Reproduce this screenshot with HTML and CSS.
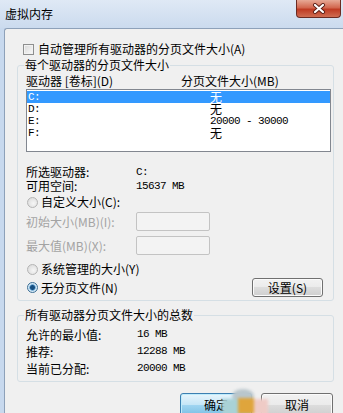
FILE: index.html
```html
<!DOCTYPE html>
<html lang="zh-CN">
<head>
    <meta charset="UTF-8">
    <meta name="viewport" content="width=device-width, initial-scale=1.0">
    <title>虚拟内存</title>
    <link rel="stylesheet" href="styles.css">
</head>
<body>

    <div class="window">
        <div class="titlebar">
            <span class="title">虚拟内存</span>
            <button class="close" type="button" aria-label="关闭">
                <svg width="14" height="11" viewBox="0 0 14 11">
                    <path d="M3 2 L11 9 M11 2 L3 9" stroke="#5a1e16" stroke-width="4" stroke-linecap="round"/>
                    <path d="M3 2 L11 9 M11 2 L3 9" stroke="#ffffff" stroke-width="2.2" stroke-linecap="round"/>
                </svg>
            </button>
        </div>

        <div class="client">
            <label class="check-row"><span class="checkbox"></span>自动管理所有驱动器的分页文件大小(A)</label>

            <fieldset class="group">
                <legend>每个驱动器的分页文件大小</legend>
                <div class="list-head"><span>驱动器 [卷标](D)</span><span>分页文件大小(MB)</span></div>
                <ul class="listbox">
                    <li class="selected"><span class="mono">C:</span><span>无</span></li>
                    <li><span class="mono">D:</span><span>无</span></li>
                    <li><span class="mono">E:</span><span class="mono">20000 - 30000</span></li>
                    <li><span class="mono">F:</span><span>无</span></li>
                </ul>

                <div class="field-row first"><span>所选驱动器:</span><span class="mono">C:</span></div>
                <div class="field-row"><span>可用空间:</span><span class="mono">15637 MB</span></div>

                <label class="radio-row"><span class="radio"></span>自定义大小(C):</label>
                <div class="input-row"><span class="muted">初始大小(MB)(I):</span><span class="textbox"></span></div>
                <div class="input-row gap"><span class="muted">最大值(MB)(X):</span><span class="textbox"></span></div>
                <label class="radio-row system"><span class="radio"></span>系统管理的大小(Y)</label>
                <div class="last-row">
                    <label class="radio-row"><span class="radio checked"></span>无分页文件(N)</label>
                    <button class="btn set" type="button">设置(S)</button>
                </div>
            </fieldset>

            <fieldset class="group totals">
                <legend>所有驱动器分页文件大小的总数</legend>
                <div class="total-row first"><span>允许的最小值:</span><span class="mono">16 MB</span></div>
                <div class="total-row"><span>推荐:</span><span class="mono">12288 MB</span></div>
                <div class="total-row"><span>当前已分配:</span><span class="mono">20000 MB</span></div>
            </fieldset>

            <div class="actions">
                <button class="btn primary" type="button">确定</button>
                <button class="btn" type="button">取消</button>
            </div>
        </div>
    </div>

    <div class="watermark">
        <span class="wm-top"></span>
        <span class="wm-a"></span>
        <span class="wm-b"></span>
        <span class="wm-c"></span>
    </div>

</body>
</html>
```

FILE: styles.css
```css
body {
    margin: 0;
    width: 343px;
    height: 413px;
    overflow: hidden;
    position: relative;
    font-family: "Noto Sans CJK SC", sans-serif;
    font-size: 12px;
    color: #000;
    background: #c8d9ee;
}

.window {
    display: flex;
    flex-direction: column;
    height: 413px;
}

.titlebar {
    height: 28px;
    flex: none;
    display: flex;
    justify-content: space-between;
    align-items: flex-start;
    background: linear-gradient(#dfe9f5, #cbdbee);
}

.title {
    margin: 7px 0 0 5px;
    line-height: 14px;
}

.close {
    width: 45px;
    height: 18px;
    margin-right: 2px;
    padding: 0;
    border: 1px solid #6b2b22;
    border-top: none;
    border-radius: 0 0 4px 4px;
    background: linear-gradient(#e7a996, #d2674f 45%, #bf3b23 55%, #cf6d52);
    display: flex;
    align-items: center;
    justify-content: center;
}

.client {
    flex: 1;
    margin-left: 4px;
    border-left: 1px solid #8ea1b9;
    border-top: 1px solid #8ea1b9;
    border-top-left-radius: 3px;
    background: #f0f0f0;
    padding: 13px 0 0 12px;
}

.mono {
    font-family: "Liberation Mono", monospace;
    font-size: 11px;
    letter-spacing: -0.6px;
}

.check-row {
    display: flex;
    align-items: center;
    gap: 4px;
    height: 14px;
    line-height: 14px;
    margin-left: 6px;
}

.checkbox {
    width: 11px;
    height: 11px;
    box-sizing: border-box;
    border: 1px solid #8e8f8f;
    background: linear-gradient(135deg, #d8d8d8, #fafafa);
    box-shadow: inset 0 0 0 1px #f2f2f2;
}

.group {
    width: 317px;
    min-width: 0;
    box-sizing: border-box;
    margin: 3px 0 0;
    padding: 0 2px 3px 8px;
    border: 1px solid #d5dfe5;
    border-radius: 3px;
}

.group legend {
    padding: 0 1px;
    margin-left: -2px;
    line-height: 12px;
}

.list-head {
    display: grid;
    grid-template-columns: 155px 1fr;
    margin-top: 4px;
    line-height: 12px;
}

.listbox {
    list-style: none;
    margin: 2px 0 0;
    padding: 1px 0 0;
    height: 63px;
    box-sizing: border-box;
    border: 1px solid #828790;
    background: #fff;
}

.listbox li {
    display: grid;
    grid-template-columns: 182px 1fr;
    height: 12px;
    line-height: 12px;
    padding-left: 1px;
}

.listbox li.selected {
    background: #3399ff;
    color: #fff;
}

.field-row {
    display: grid;
    grid-template-columns: 110px 1fr;
    line-height: 14px;
}

.field-row.first {
    margin-top: 13px;
}

.radio-row {
    display: flex;
    align-items: center;
    gap: 3px;
    height: 14px;
    line-height: 14px;
    margin-top: 2px;
    margin-left: 1px;
}

.radio-row.system {
    margin-top: 7px;
}

.radio {
    width: 11px;
    height: 11px;
    box-sizing: border-box;
    border-radius: 50%;
    border: 1px solid #b4b4b4;
    background: radial-gradient(circle at 60% 60%, #f6f6f6, #d6d6d6);
}

.radio.checked {
    border-color: #3d6f95;
    background: radial-gradient(circle, #174f80 0 2px, #4a8dc2 2.6px, #cde5f5 3.6px, #eef6fb);
}

.input-row {
    display: grid;
    grid-template-columns: 110px 74px;
    align-items: center;
    height: 19px;
    margin-top: 3px;
}

.input-row.gap {
    margin-top: 5px;
}

.muted {
    color: #a3a3a3;
}

.textbox {
    height: 19px;
    box-sizing: border-box;
    border: 1px solid #c3c3c3;
    border-radius: 2px;
    background: #f3f3f3;
}

.last-row {
    display: flex;
    justify-content: space-between;
    align-items: center;
    height: 19px;
    margin-top: 2px;
}

.last-row .radio-row {
    margin-top: 0;
}

.btn {
    font-family: inherit;
    font-size: 12px;
    color: #000;
    padding: 0;
    border: 1px solid #707070;
    border-radius: 3px;
    background: linear-gradient(#f2f2f2, #ebebeb 50%, #dddddd 50%, #cfcfcf);
    box-shadow: inset 0 0 0 1px #fbfbfb;
}

.btn.set {
    width: 71px;
    height: 19px;
    line-height: 16px;
    margin-right: 8px;
}

.totals {
    margin-top: 8px;
    padding-bottom: 4px;
}

.total-row {
    display: grid;
    grid-template-columns: 111px 1fr;
    line-height: 17px;
}

.total-row.first {
    margin-top: 5px;
}

.actions {
    display: flex;
    justify-content: flex-end;
    gap: 9px;
    margin-top: 11px;
    padding-right: 10px;
}

.actions .btn {
    width: 72px;
    height: 23px;
}

.btn.primary {
    border-color: #3c7fb1;
    background: linear-gradient(#e8f5fc, #c6e6f7 50%, #a2d6f2 50%, #7cc0e4);
    box-shadow: inset 0 0 0 1px #c0ecfc;
}

.watermark {
    position: absolute;
    left: 222px;
    top: 389px;
    width: 46px;
    height: 24px;
    filter: blur(1.5px);
}

.watermark span {
    position: absolute;
}

.wm-top {
    left: 10px;
    top: 0;
    width: 22px;
    height: 14px;
    border-radius: 50%;
    background: #b9c6cc;
}

.wm-a {
    left: 0;
    top: 10px;
    width: 16px;
    height: 16px;
    background: #a9d2d6;
}

.wm-b {
    left: 16px;
    top: 9px;
    width: 16px;
    height: 16px;
    background: #dfa53c;
}

.wm-c {
    left: 32px;
    top: 10px;
    width: 14px;
    height: 16px;
    background: #efcbc6;
}
```
